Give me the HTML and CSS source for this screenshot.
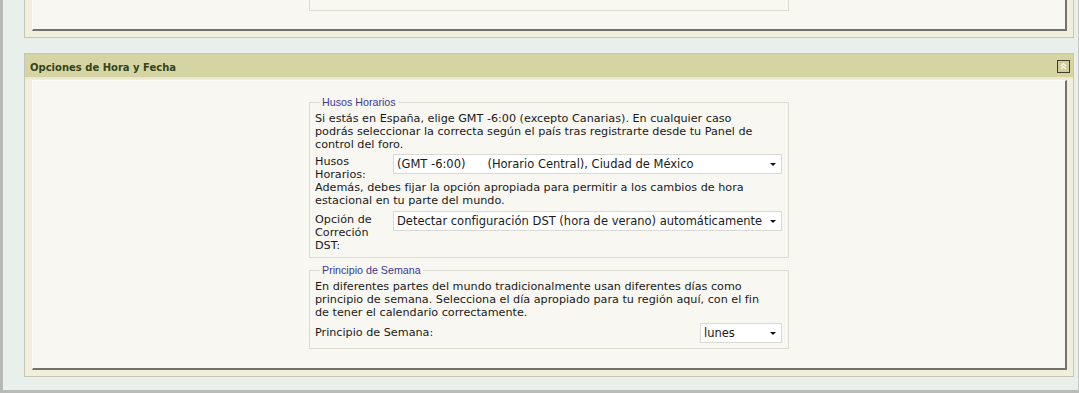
FILE: index.html
```html
<!DOCTYPE html>
<html lang="es">
<head>
    <meta charset="UTF-8">
    <title>Opciones de Hora y Fecha</title>
    <link rel="stylesheet" href="styles.css">
</head>
<body>
    <div class="page">

        <!-- bloque anterior (cortado) -->
        <div class="panel panel-prev">
            <div class="panel-body">
                <div class="fieldset-end"></div>
            </div>
        </div>

        <!-- Opciones de Hora y Fecha -->
        <div class="panel">
            <div class="panel-head">
                <h3>Opciones de Hora y Fecha</h3>
                <span class="collapse-btn">
                    <svg width="11" height="11" viewBox="0 0 11 11">
                        <polyline points="3,5 5.5,2.5 8,5" fill="none" stroke="#fbfbee" stroke-width="1.2"/>
                        <polyline points="3,8 5.5,5.5 8,8" fill="none" stroke="#fbfbee" stroke-width="1.2"/>
                    </svg>
                </span>
            </div>
            <div class="panel-strip"></div>
            <div class="panel-body">

                <fieldset class="group">
                    <legend>Husos Horarios</legend>
                    <p class="wide">Si estás en España, elige GMT -6:00 (excepto Canarias). En cualquier caso<br>podrás seleccionar la correcta según el país tras registrarte desde tu Panel de<br>control del foro.</p>
                    <div class="row">
                        <label class="row-label">Husos Horarios:</label>
                        <div class="select-box">
                            <select>
                                <option>(GMT -6:00)&nbsp;&nbsp;&nbsp;&nbsp;&nbsp; (Horario Central), Ciudad de México</option>
                            </select>
                        </div>
                    </div>
                    <p>Además, debes fijar la opción apropiada para permitir a los cambios de hora estacional en tu parte del mundo.</p>
                    <div class="row row-dst">
                        <label class="row-label">Opción de Correción DST:</label>
                        <div class="select-box">
                            <select>
                                <option>Detectar configuración DST (hora de verano) automáticamente</option>
                            </select>
                        </div>
                    </div>
                </fieldset>

                <fieldset class="group group-week">
                    <legend>Principio de Semana</legend>
                    <p>En diferentes partes del mundo tradicionalmente usan diferentes días como principio de semana. Selecciona el día apropiado para tu región aquí, con el fin de tener el calendario correctamente.</p>
                    <div class="row row-week">
                        <label class="row-label">Principio de Semana:</label>
                        <div class="select-box select-small">
                            <select>
                                <option>lunes</option>
                            </select>
                        </div>
                    </div>
                </fieldset>

            </div>
        </div>

    </div>
</body>
</html>
```

FILE: styles.css
```css
/* base */
* {
    box-sizing: border-box;
}

body {
    margin: 0;
    background-color: #e9f0ec;
    font-family: "DejaVu Sans", Verdana, sans-serif;
    font-size: 11.2px;
    color: #1a1a1a;
}

.page {
    height: 393px;
    border-left: 3px solid #b6b9b6;
    border-bottom: 3px solid #b8bbb8;
    border-right: 1px solid #c4c8c4;
    padding: 0 2px 0 21px;
    width: 1079px;
}

/* paneles */
.panel {
    width: 1050px;
    border: 1px solid #c4c7b2;
    background-color: #f1efdc;
    padding: 0 6px 6px 7px;
}

.panel + .panel {
    margin-top: 15px;
    padding: 0 0 6px 0;
}

.panel-prev {
    border-top: none;
}

.panel-body {
    background-color: #f8f7f1;
    border-top: 1px solid #fdfdf8;
    border-left: 1px solid #fdfdf8;
    border-right: 2px solid #737369;
    border-bottom: 2px solid #737369;
}

.panel-prev .panel-body {
    height: 31px;
    border-top: none;
}

.panel + .panel .panel-body {
    margin: 0 6px 0 7px;
    padding: 15px 0 19px;
}

.fieldset-end {
    width: 480px;
    height: 11px;
    margin: 0 auto;
    border: 1px solid #dcdcd0;
    border-top: none;
}

/* cabecera */
.panel-head {
    display: flex;
    align-items: center;
    justify-content: space-between;
    height: 23px;
    background-color: #d5d5a3;
    padding: 0 3px 0 5px;
}

.panel-head h3 {
    margin: 0;
    padding-top: 3px;
    font-size: 10px;
    font-weight: bold;
    color: #34431a;
}

.collapse-btn {
    display: flex;
    align-items: center;
    justify-content: center;
    width: 13px;
    height: 13px;
    border: 1px solid #3e3e2a;
    background-color: #cfcf9c;
    margin-top: 2px;
}

.panel-strip {
    height: 3px;
    background: linear-gradient(#e6e6c6, #f1efdc);
}

/* grupos */
.group {
    width: 480px;
    margin: 0 auto;
    border: 1px solid #dcdcd0;
    padding: 0 5px 5px 5px;
}

.group-week {
    margin-top: 6px;
}

.group legend {
    font-family: "Liberation Sans", Arial, sans-serif;
    font-size: 10.7px;
    line-height: 13px;
    color: #3a3a96;
    padding: 0 2px;
    margin-left: 5px;
}

.group p {
    margin: 3px 0 0;
    line-height: 13px;
}

.group p.wide {
    margin-right: -4px;
    white-space: nowrap;
}

.group-week p {
    padding-right: 12px;
}

.group .row + p {
    margin-top: 0;
}

.row {
    display: flex;
    align-items: flex-start;
    margin-top: 3px;
    padding-right: 1px;
}

.row-label {
    width: 78px;
    flex-shrink: 0;
    line-height: 13px;
    padding-top: 1px;
}

.row-dst {
    margin-top: 4px;
}

.row-dst .row-label {
    width: 70px;
    margin-right: 8px;
    padding-top: 2px;
}

.row-week {
    justify-content: space-between;
    margin-top: 4px;
}

.row-week .row-label {
    width: auto;
    padding-top: 3px;
}

/* desplegables */
.select-box {
    position: relative;
    flex: 1;
}

.select-box::after {
    content: "";
    position: absolute;
    right: 6px;
    top: 9px;
    border-left: 3px solid transparent;
    border-right: 3px solid transparent;
    border-top: 3px solid #111;
    pointer-events: none;
}

.select-box select {
    appearance: none;
    -webkit-appearance: none;
    width: 100%;
    height: 20px;
    border: 1px solid #dadad4;
    border-radius: 0;
    background-color: #fff;
    font-family: "DejaVu Sans", Verdana, sans-serif;
    font-size: 11.5px;
    color: #1a1a1a;
    padding: 0 3px;
    margin: 0;
}

.select-small {
    flex: none;
    width: 82px;
}
```
